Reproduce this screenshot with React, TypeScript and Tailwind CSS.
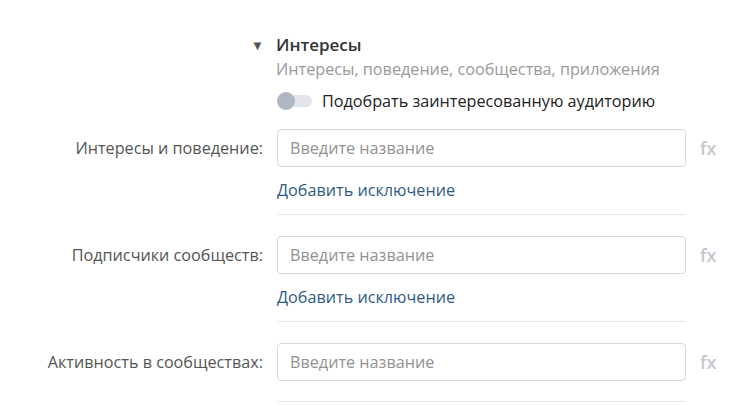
const font = { fontFamily: '"Open Sans", "Noto Sans", sans-serif' };

function Row({ label, exclude }: { label: string; exclude: boolean }) {
  return (
    <div className="flex">
      <div className="w-[277px] shrink-0 pr-[14px] h-[38px] flex items-center justify-end text-[16.2px] text-[#555]">
        {label}
      </div>
      <div className="w-[409px]">
        <div className="h-[38px] border border-[#d3d9de] rounded-[4px] bg-white flex items-center px-[12px] text-[16.2px] text-[#929292]">
          Введите название
        </div>
        {exclude && (
          <div className="h-[20px] mt-[13px] flex items-center text-[16.2px] text-[#2f5a84]">
            Добавить исключение
          </div>
        )}
        <div className={`border-t border-[#e7e8ec] ${exclude ? "mt-[14px]" : "mt-[20px]"} mb-[21px]`} />
      </div>
      <div className="pl-[14px] h-[38px] flex items-center text-[18px] font-semibold text-[#c5c8cc]">fx</div>
    </div>
  );
}

export default function App() {
  return (
    <div className="w-[744px] h-[406px] bg-white overflow-hidden" style={font}>
      <div className="pt-[34px] pl-[251px]">
        <div className="flex items-center h-[22px]">
          <span className="w-[25px] text-[13px] text-[#555] leading-none">▼</span>
          <span className="text-[17px] font-semibold text-[#333]">Интересы</span>
        </div>
        <div className="pl-[25px] h-[22px] mt-[2px] flex items-center text-[16.2px] text-[#999]">
          Интересы, поведение, сообщества, приложения
        </div>
        <div className="pl-[26px] h-[22px] mt-[10px] flex items-center">
          <div className="relative w-[35px] h-[12px] rounded-full bg-[#e1e5eb]">
            <div className="absolute left-0 top-[-3px] w-[18px] h-[18px] rounded-full bg-[#aeb7c2]" />
          </div>
          <span className="ml-[10px] text-[16.2px] text-[#222]">Подобрать заинтересованную аудиторию</span>
        </div>
      </div>
      <div className="mt-[17px]">
        <Row label="Интересы и поведение:" exclude />
        <Row label="Подписчики сообществ:" exclude />
        <Row label="Активность в сообществах:" exclude={false} />
      </div>
    </div>
  );
}
